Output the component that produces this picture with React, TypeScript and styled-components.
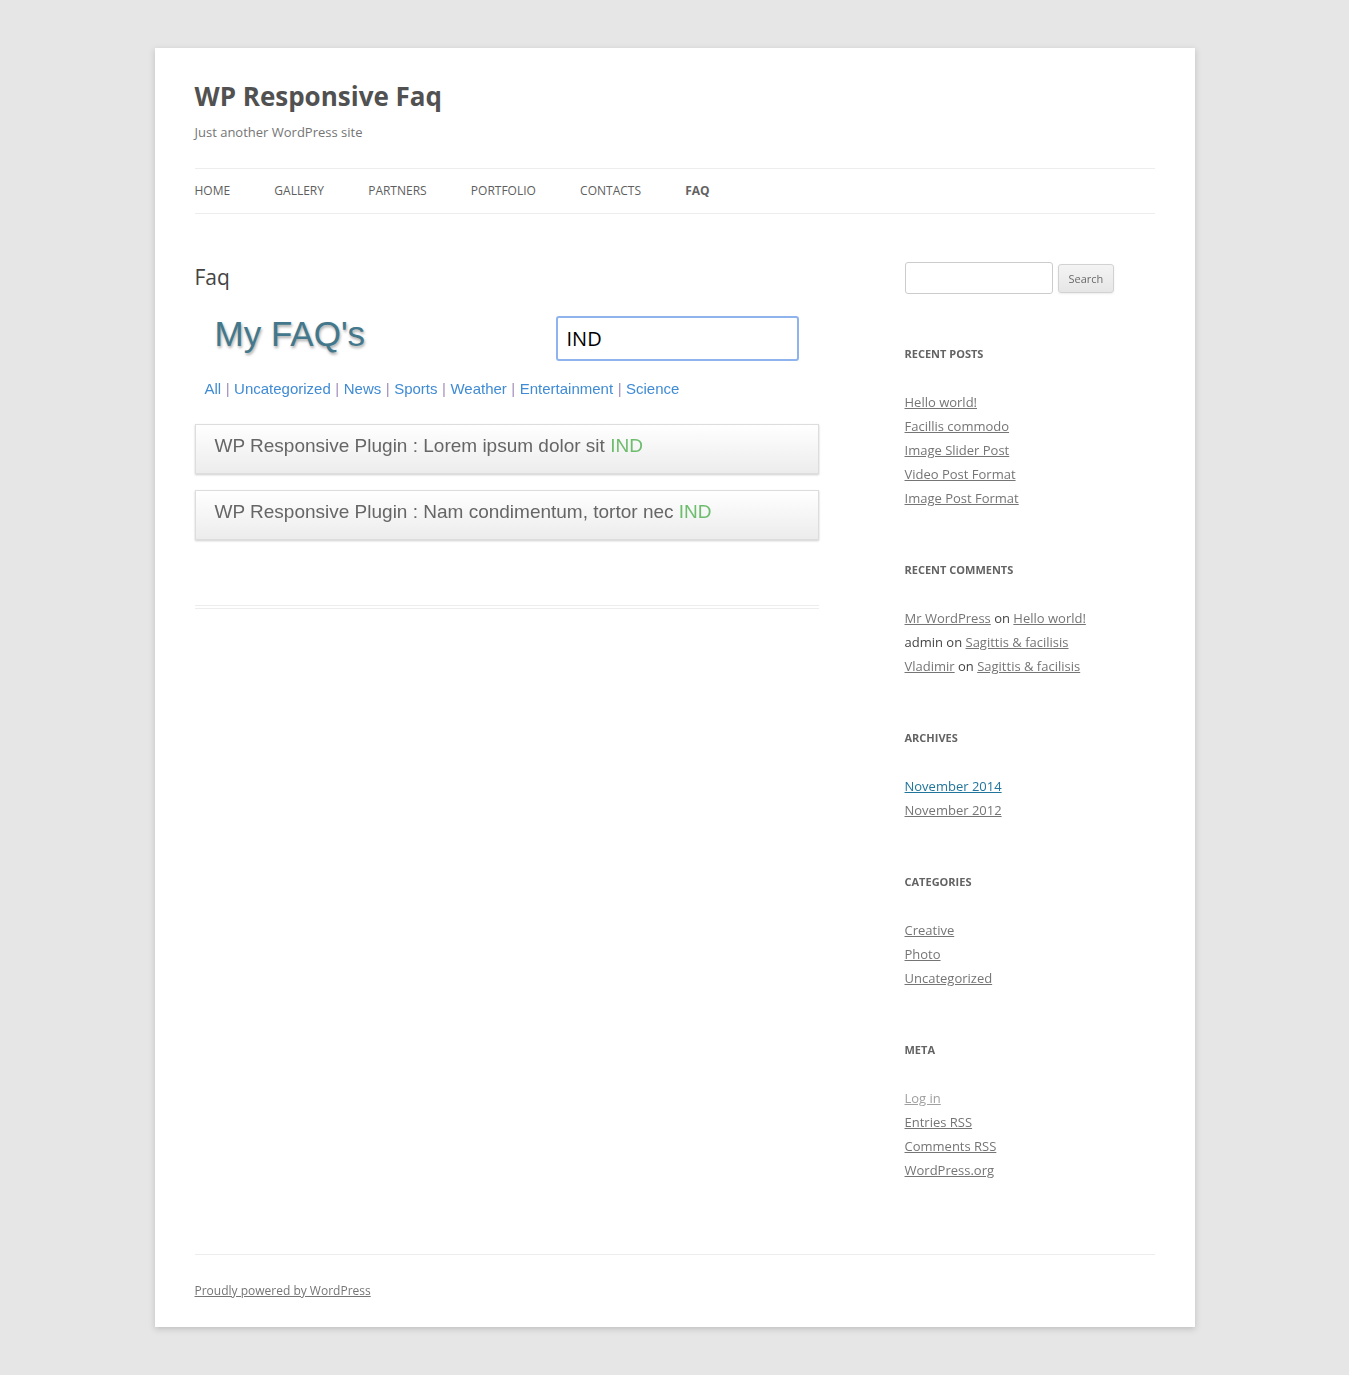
import styled, { createGlobalStyle } from 'styled-components'

const GlobalStyle = createGlobalStyle`
  html, body {
    margin: 0;
    padding: 0;
    background: #e6e6e6;
  }
  body {
    font-family: "Open Sans", "Liberation Sans", sans-serif;
    color: #444;
    font-size: 14px;
  }
  * { box-sizing: border-box; }
`

const recentPosts = ['Hello world!', 'Facillis commodo', 'Image Slider Post', 'Video Post Format', 'Image Post Format']
const categories = ['Creative', 'Photo', 'Uncategorized']
const navItems = ['Home', 'Gallery', 'Partners', 'Portfolio', 'Contacts', 'FAQ']
const faqCats = ['All', 'Uncategorized', 'News', 'Sports', 'Weather', 'Entertainment', 'Science']
const faqs = ['WP Responsive Plugin : Lorem ipsum dolor sit', 'WP Responsive Plugin : Nam condimentum, tortor nec']

function App() {
  return (
    <>
      <GlobalStyle />
      <Site>
        <Header>
          <SiteTitle>WP Responsive Faq</SiteTitle>
          <Tagline>Just another WordPress site</Tagline>
          <Nav>
            {navItems.map((n) => (
              <NavItem key={n} $active={n === 'FAQ'}>{n}</NavItem>
            ))}
          </Nav>
        </Header>

        <Main>
          <Content>
            <Article>
              <EntryTitle>Faq</EntryTitle>
              <FaqTop>
                <FaqHeading>My FAQ's</FaqHeading>
                <FaqSearch defaultValue="IND" autoFocus />
              </FaqTop>
              <FaqCats>
                {faqCats.map((c, i) => (
                  <span key={c}>
                    {i > 0 && <Sep>|</Sep>}
                    <FaqCat>{c}</FaqCat>
                  </span>
                ))}
              </FaqCats>
              <FaqList>
                {faqs.map((q) => (
                  <FaqItem key={q}>
                    {q} <Hit>IND</Hit>
                  </FaqItem>
                ))}
              </FaqList>
            </Article>
          </Content>

          <Sidebar>
            <SearchWidget>
              <SideInput />
              <SideButton>Search</SideButton>
            </SearchWidget>

            <Widget>
              <WidgetTitle>Recent Posts</WidgetTitle>
              <WidgetList>
                {recentPosts.map((p) => (
                  <li key={p}><SideLink>{p}</SideLink></li>
                ))}
              </WidgetList>
            </Widget>

            <Widget>
              <WidgetTitle>Recent Comments</WidgetTitle>
              <WidgetList>
                <li><SideLink>Mr WordPress</SideLink> on <SideLink>Hello world!</SideLink></li>
                <li>admin on <SideLink>Sagittis &amp; facilisis</SideLink></li>
                <li><SideLink>Vladimir</SideLink> on <SideLink>Sagittis &amp; facilisis</SideLink></li>
              </WidgetList>
            </Widget>

            <Widget>
              <WidgetTitle>Archives</WidgetTitle>
              <WidgetList>
                <li><SideLink $tone="blue">November 2014</SideLink></li>
                <li><SideLink>November 2012</SideLink></li>
              </WidgetList>
            </Widget>

            <Widget>
              <WidgetTitle>Categories</WidgetTitle>
              <WidgetList>
                {categories.map((c) => (
                  <li key={c}><SideLink>{c}</SideLink></li>
                ))}
              </WidgetList>
            </Widget>

            <Widget>
              <WidgetTitle>Meta</WidgetTitle>
              <WidgetList>
                <li><SideLink $tone="light">Log in</SideLink></li>
                <li><SideLink>Entries RSS</SideLink></li>
                <li><SideLink>Comments RSS</SideLink></li>
                <li><SideLink>WordPress.org</SideLink></li>
              </WidgetList>
            </Widget>
          </Sidebar>
        </Main>

        <Footer>
          <FooterLink>Proudly powered by WordPress</FooterLink>
        </Footer>
      </Site>
    </>
  )
}

const Site = styled.div`
  width: 1040px;
  margin: 48px auto;
  padding: 0 40px;
  background: #fff;
  box-shadow: 0 2px 6px rgba(100, 100, 100, 0.3);
`

const Header = styled.header`
  padding-top: 24px;
`

const SiteTitle = styled.h1`
  margin: 0;
  font-size: 26px;
  line-height: 48px;
  font-weight: 700;
  color: #515151;
`

const Tagline = styled.h2`
  margin: 0;
  font-size: 13px;
  line-height: 24px;
  font-weight: 400;
  color: #757575;
`

const Nav = styled.nav`
  margin-top: 24px;
  display: flex;
  gap: 44.2px;
  border-top: 1px solid #ededed;
  border-bottom: 1px solid #ededed;
  height: 46px;
  align-items: center;
  padding-bottom: 2px;
`

const NavItem = styled.a<{ $active?: boolean }>`
  font-size: 12px;
  text-transform: uppercase;
  color: ${(p) => (p.$active ? '#636363' : '#5e5e5e')};
  font-weight: ${(p) => (p.$active ? 700 : 400)};
  text-decoration: none;
`

const Main = styled.div`
  display: flex;
  justify-content: space-between;
  margin-top: 48px;
`

const Content = styled.div`
  width: 624px;
`

const Article = styled.article`
  border-bottom: 4px double #ededed;
  padding-bottom: 65px;
`

const EntryTitle = styled.h1`
  margin: 0 0 24px;
  font-size: 21px;
  line-height: 30px;
  font-weight: 400;
  color: #444;
`

const FaqTop = styled.div`
  display: flex;
  align-items: center;
  justify-content: space-between;
  padding: 0 20px;
`

const FaqHeading = styled.h2`
  margin: -5px 0 5px;
  font-family: "Liberation Sans", Arial, sans-serif;
  font-size: 35px;
  font-weight: 400;
  color: #43788c;
  text-shadow: 1px 2px 3px rgba(0, 0, 0, 0.35);
`

const FaqSearch = styled.input`
  width: 243px;
  height: 45px;
  border: 2px solid #8fb3ec;
  border-radius: 3px;
  padding: 0 9px;
  font-family: "Open Sans", sans-serif;
  font-size: 20px;
  color: #000;
  outline: none;
  caret-color: #000;
`

const FaqCats = styled.div`
  margin: 17px 0 0 10px;
  font-family: "Liberation Sans", Arial, sans-serif;
  font-size: 15px;
  line-height: 22px;
`

const FaqCat = styled.a`
  color: #3f8bd4;
`

const Sep = styled.span`
  color: #a48fbf;
  margin: 0 4.5px;
`

const FaqList = styled.div`
  margin-top: 24px;
  display: flex;
  flex-direction: column;
  gap: 16px;
`

const FaqItem = styled.div`
  height: 50px;
  border: 1px solid #ddd;
  background: linear-gradient(#fff, #ececec);
  box-shadow: 0 1px 2px rgba(0, 0, 0, 0.2);
  padding: 10px 20px 0 19px;
  font-family: "Liberation Sans", Arial, sans-serif;
  font-size: 19px;
  color: #666;
`

const Hit = styled.span`
  color: #6ebd6e;
`

const Sidebar = styled.aside`
  width: 250px;
`

const SearchWidget = styled.div`
  display: flex;
  align-items: center;
  gap: 5px;
  margin-bottom: 48px;
  height: 32px;
`

const SideInput = styled.input`
  width: 148px;
  height: 32px;
  border: 1px solid #ccc;
  border-radius: 3px;
`

const SideButton = styled.button`
  height: 29px;
  padding: 0 10px;
  font-family: "Open Sans", sans-serif;
  font-size: 11px;
  color: #6a6a6a;
  border: 1px solid #d2d2d2;
  border-radius: 3px;
  background: linear-gradient(#f4f4f4, #e6e6e6);
  box-shadow: 0 1px 2px rgba(64, 64, 64, 0.1);
`

const Widget = styled.section`
  margin-bottom: 48px;
`

const WidgetTitle = styled.h3`
  margin: 0 0 24px;
  font-size: 11px;
  line-height: 24px;
  font-weight: 700;
  text-transform: uppercase;
  color: #636363;
`

const WidgetList = styled.ul`
  list-style: none;
  margin: 0;
  padding: 0;
  font-size: 13px;
  line-height: 24px;
  color: #444;
`

const SideLink = styled.a<{ $tone?: 'blue' | 'light' }>`
  color: ${(p) => (p.$tone === 'blue' ? '#21759b' : p.$tone === 'light' ? '#a0a0a0' : '#757575')};
  text-decoration: underline;
`

const Footer = styled.footer`
  border-top: 1px solid #ededed;
  margin-top: 24px;
  padding: 24px 0;
`

const FooterLink = styled.a`
  font-size: 12px;
  line-height: 24px;
  color: #757575;
  text-decoration: underline;
  display: block;
`

export default App
